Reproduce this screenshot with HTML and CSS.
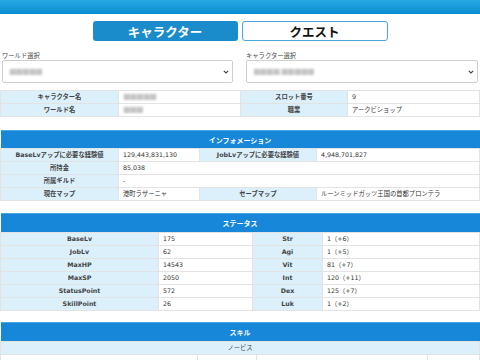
FILE: index.html
```html
<!DOCTYPE html>
<html lang="ja">
<head>
<meta charset="utf-8">
<link rel="stylesheet" href="styles.css">
</head>
<body>
<div class="topbar"></div>
<nav class="tabs">
  <div class="tab tab-active">キャラクター</div>
  <div class="tab tab-idle">クエスト</div>
</nav>
<div class="pickers">
  <div class="picker picker-left">
    <div class="picker-label">ワールド選択</div>
    <div class="select"><span class="blur">■■■■■</span><svg class="chev" width="6" height="4" viewBox="0 0 6 4"><path d="M0.8 0.8 L3 3 L5.2 0.8" fill="none" stroke="#444" stroke-width="1.1"/></svg></div>
  </div>
  <div class="picker picker-right">
    <div class="picker-label">キャラクター選択</div>
    <div class="select"><span class="blur">■■■■ ■■■■■</span><svg class="chev" width="6" height="4" viewBox="0 0 6 4"><path d="M0.8 0.8 L3 3 L5.2 0.8" fill="none" stroke="#444" stroke-width="1.1"/></svg></div>
  </div>
</div>

<table class="grid t-basic">
  <colgroup><col style="width:118px"><col style="width:122px"><col style="width:107px"><col></colgroup>
  <tr><th>キャラクター名</th><td><span class="blur">■■■■■</span></td><th>スロット番号</th><td>9</td></tr>
  <tr><th>ワールド名</th><td><span class="blur">■■■</span></td><th>職業</th><td>アークビショップ</td></tr>
</table>

<table class="grid t-info section">
  <colgroup><col style="width:118px"><col style="width:81px"><col style="width:117px"><col></colgroup>
  <tr><td colspan="4" class="head">インフォメーション</td></tr>
  <tr><th>BaseLvアップに必要な経験値</th><td>129,443,831,130</td><th>JobLvアップに必要な経験値</th><td>4,948,701,827</td></tr>
  <tr><th>所持金</th><td colspan="3">85,038</td></tr>
  <tr><th>所属ギルド</th><td colspan="3">-</td></tr>
  <tr><th>現在マップ</th><td>港町ラザーニャ</td><th>セーブマップ</th><td>ルーンミッドガッツ王国の首都プロンテラ</td></tr>
</table>

<table class="grid t-status section">
  <colgroup><col style="width:158px"><col style="width:94px"><col style="width:70px"><col></colgroup>
  <tr><td colspan="4" class="head">ステータス</td></tr>
  <tr><th>BaseLv</th><td>175</td><th>Str</th><td>1（+6）</td></tr>
  <tr><th>JobLv</th><td>62</td><th>Agi</th><td>1（+5）</td></tr>
  <tr><th>MaxHP</th><td>14543</td><th>Vit</th><td>81（+7）</td></tr>
  <tr><th>MaxSP</th><td>2050</td><th>Int</th><td>120（+11）</td></tr>
  <tr><th>StatusPoint</th><td>572</td><th>Dex</th><td>125（+7）</td></tr>
  <tr><th>SkillPoint</th><td>26</td><th>Luk</th><td>1（+2）</td></tr>
</table>

<table class="grid t-skill section">
  <colgroup><col style="width:197px"><col style="width:59px"><col style="width:171px"><col></colgroup>
  <tr><td colspan="4" class="head">スキル</td></tr>
  <tr><th colspan="4" class="sub">ノービス</th></tr>
  <tr><td></td><td></td><td></td><td></td></tr>
</table>
</body>
</html>
```
FILE: styles.css
```css
html, body {
  margin: 0;
  padding: 0;
  background: #fff;
  font-family: "DejaVu Sans", "Noto Sans CJK JP", sans-serif;
  font-size: 6.3px;
  color: #333;
}
.topbar {
  height: 14px;
  background: linear-gradient(#27a9e4, #0a8ccf);
}
.tabs {
  display: flex;
  justify-content: center;
  gap: 4px;
  padding-top: 7px;
}
.tab {
  width: 145px;
  height: 20px;
  box-sizing: border-box;
  border-radius: 3px;
  display: flex;
  align-items: center;
  justify-content: center;
  font-family: "Noto Sans CJK JP", sans-serif;
  font-weight: bold;
  font-size: 12.5px;
}
.tab-active {
  background: #1a8bcb;
  color: #fff;
}
.tab-idle {
  width: 146px;
  background: #fff;
  border: 1.5px solid #4ba6dc;
  color: #111;
}
.pickers {
  display: flex;
  margin-top: 11px;
}
.picker {
  width: 240px;
  box-sizing: border-box;
}
.picker-left { padding: 0 7px 0 2px; }
.picker-right { padding: 0 2px 0 6px; }
.picker-label {
  height: 8px;
  line-height: 8px;
  color: #444;
  font-family: "Noto Sans CJK JP", sans-serif;
}
.select {
  height: 23px;
  box-sizing: border-box;
  border: 1px solid #cfcfcf;
  border-radius: 2px;
  display: flex;
  align-items: center;
  justify-content: space-between;
  padding: 0 3px 0 6px;
  background: #fff;
}
.blur {
  color: #c4c4c4;
  filter: blur(1px);
  font-size: 8px;
  letter-spacing: -1px;
}
.chev { display: block; }
.grid {
  width: 480px;
  table-layout: fixed;
  border-collapse: collapse;
  margin: 0;
}
.t-basic { margin-top: 7px; }
.section { margin-top: 13px; }
.t-status { margin-top: 12px; }
.t-skill { margin-top: 11px; }
.grid th, .grid td {
  height: 13px;
  padding: 0 4px;
  border: 1px solid #e3e3e3;
  box-sizing: border-box;
  line-height: 12px;
  white-space: nowrap;
  overflow: hidden;
}
.grid th {
  background: #dcf0fc;
  font-weight: bold;
  color: #444;
  text-align: center;
}
.grid td {
  text-align: left;
  color: #333;
}
.grid td.head {
  height: 19px;
  background: #1787d9;
  border: none;
  border-top: 1px solid #4aa4e3;
  color: #fff;
  font-weight: bold;
  font-size: 7px;
  text-align: center;
  font-family: "Noto Sans CJK JP", sans-serif;
}
.t-info td.head { height: 18px; }
.grid th.sub {
  height: 12px;
  font-weight: normal;
  color: #444;
}
```
